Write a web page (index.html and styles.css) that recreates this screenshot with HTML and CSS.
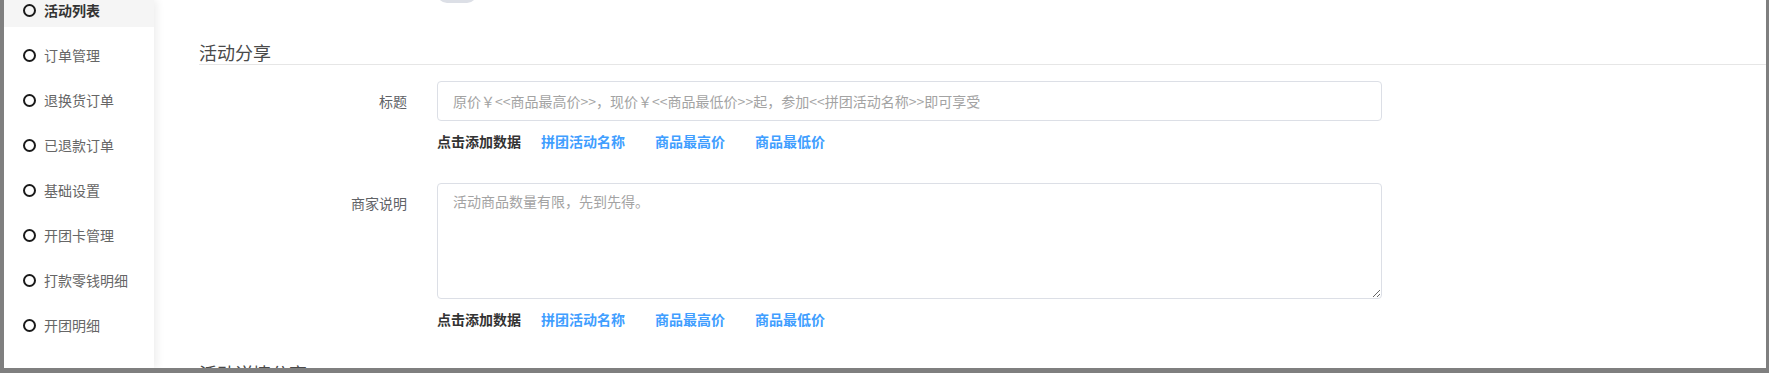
FILE: index.html
```html
<!DOCTYPE html>
<html lang="zh-CN">
<head>
    <meta charset="UTF-8">
    <meta name="viewport" content="width=device-width, initial-scale=1.0">
    <title>活动分享</title>
    <link rel="stylesheet" href="styles.css">
</head>
<body>
    <div class="screen">
        <div class="sidebar">
            <ul class="menu">
                <li class="menu-item active"><span class="dot"></span>活动列表</li>
                <li class="menu-item"><span class="dot"></span>订单管理</li>
                <li class="menu-item"><span class="dot"></span>退换货订单</li>
                <li class="menu-item"><span class="dot"></span>已退款订单</li>
                <li class="menu-item"><span class="dot"></span>基础设置</li>
                <li class="menu-item"><span class="dot"></span>开团卡管理</li>
                <li class="menu-item"><span class="dot"></span>打款零钱明细</li>
                <li class="menu-item"><span class="dot"></span>开团明细</li>
            </ul>
        </div>

        <div class="main">
            <div class="switch-row">
                <span class="switch"></span>
            </div>

            <h3 class="section-title">活动分享</h3>

            <div class="form-row">
                <label class="form-label">标题</label>
                <div class="form-field">
                    <input class="text-input" type="text" placeholder="原价￥<<商品最高价>>，现价￥<<商品最低价>>起，参加<<拼团活动名称>>即可享受">
                    <div class="data-links">
                        <span class="data-tip">点击添加数据</span>
                        <a class="data-link">拼团活动名称</a>
                        <a class="data-link">商品最高价</a>
                        <a class="data-link">商品最低价</a>
                    </div>
                </div>
            </div>

            <div class="form-row textarea-row">
                <label class="form-label top">商家说明</label>
                <div class="form-field">
                    <textarea class="text-area" placeholder="活动商品数量有限，先到先得。"></textarea>
                    <div class="data-links">
                        <span class="data-tip">点击添加数据</span>
                        <a class="data-link">拼团活动名称</a>
                        <a class="data-link">商品最高价</a>
                        <a class="data-link">商品最低价</a>
                    </div>
                </div>
            </div>

            <h3 class="section-title next">活动详情分享</h3>
        </div>
    </div>
</body>
</html>
```

FILE: styles.css
```css
body {
    margin: 0;
    background-color: #7f7f7f;
    font-family: "Noto Sans CJK SC", "Liberation Sans", sans-serif;
    overflow: hidden;
}
.screen {
    display: flex;
    height: 368px;
    margin: 0 3px 0 4px;
    overflow: hidden;
}
.sidebar {
    width: 150px;
    flex-shrink: 0;
    background: #fff;
    box-shadow: 3px 0 8px rgba(0, 0, 0, 0.07);
    position: relative;
    z-index: 1;
}
.menu {
    list-style: none;
    margin: -7px 0 0 0;
    padding: 0;
}
.menu-item {
    display: flex;
    align-items: center;
    height: 34px;
    margin-bottom: 11px;
    padding-left: 19px;
    font-size: 14px;
    color: #666;
}
.menu-item.active {
    background: #f5f5f5;
    color: #333;
    font-weight: bold;
}
.dot {
    width: 9px;
    height: 9px;
    border: 2px solid #1a1a1a;
    border-radius: 50%;
    margin-right: 8px;
}
.main {
    flex: 1;
    background: #fff;
    padding-left: 45px;
    overflow: hidden;
}
.switch-row {
    padding-left: 238px;
    margin-top: -17px;
    height: 20px;
}
.switch {
    display: block;
    width: 40px;
    height: 20px;
    border-radius: 10px;
    background: #dcdfe6;
}
.section-title {
    margin: 37px 0 0 0;
    font-size: 18px;
    line-height: 24px;
    font-weight: normal;
    color: #4a4a4a;
    border-bottom: 1px solid #e6e6e6;
}
.section-title.next {
    margin-top: 32px;
}
.form-row {
    display: flex;
    margin-top: 16px;
}
.textarea-row {
    margin-top: 32px;
}
.form-label {
    width: 208px;
    padding-right: 30px;
    text-align: right;
    font-size: 14px;
    color: #606266;
    line-height: 40px;
}
.form-field {
    width: 945px;
}
.text-input {
    display: block;
    box-sizing: border-box;
    width: 100%;
    height: 40px;
    padding: 0 15px;
    border: 1px solid #dcdfe6;
    border-radius: 4px;
    font-family: inherit;
    font-size: 14px;
    outline: none;
}
.text-area {
    display: block;
    box-sizing: border-box;
    width: 100%;
    height: 116px;
    padding: 7px 15px;
    border: 1px solid #dcdfe6;
    border-radius: 4px;
    font-family: inherit;
    font-size: 14px;
    line-height: 21px;
    outline: none;
}
.text-input::placeholder, .text-area::placeholder {
    color: #a3a3a3;
}
.data-links {
    display: flex;
    margin-top: 10px;
    font-size: 14px;
    line-height: 20px;
    font-weight: bold;
}
.data-tip {
    color: #333;
    margin-right: 20px;
}
.data-link {
    color: #409eff;
    margin-right: 30px;
    cursor: pointer;
}
```
